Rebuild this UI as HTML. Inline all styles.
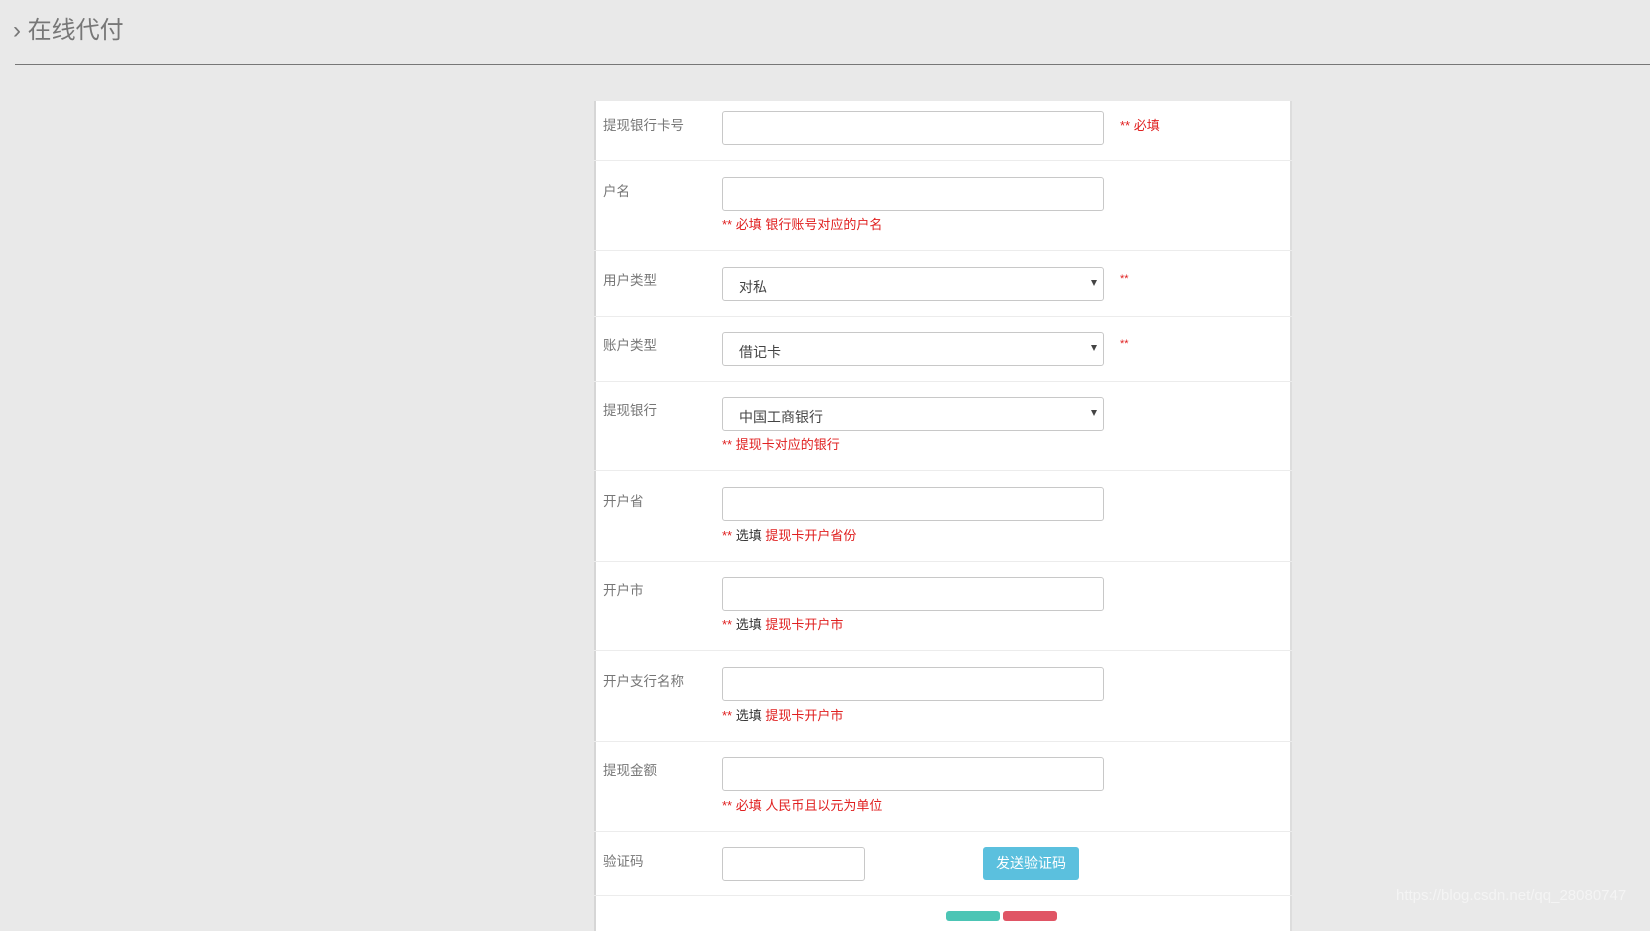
<!DOCTYPE html>
<html><head><meta charset="utf-8"><style>
*{margin:0;padding:0;box-sizing:border-box}
body{width:1650px;height:915px;background:#e9e9e9;font-family:"Liberation Sans","Noto Sans CJK SC",sans-serif;position:relative;overflow:hidden;color:#666}
.t{position:absolute;white-space:nowrap;line-height:1}
.panel{position:absolute;left:594px;top:101px;width:698px;height:830px;background:#fff;border-left:2px solid #d6d6d6;border-right:2px solid #ddd}
.sep{position:absolute;left:594px;width:698px;height:1px;background:#ececec}
.in{position:absolute;left:722px;width:382px;height:34px;border:1px solid #c8c8c8;border-radius:3px;background:#fff}
.sel span{position:absolute;left:16px;top:9px;font-size:14px;color:#444}
.sel i{position:absolute;right:6px;top:12px;width:0;height:0;border-left:3.5px solid transparent;border-right:3.5px solid transparent;border-top:6px solid #444}
.lab{left:603px;font-size:13.5px;color:#777}
.red{color:#e02020;font-size:13px}
.blk{color:#333}
</style></head><body>
<div class="t" style="left:13px;top:19px;font-size:24px;color:#777">›&nbsp;在线代付</div>
<div style="position:absolute;left:15px;top:64px;width:1635px;height:1px;background:#777"></div>
<div class="panel"></div>
<div class="sep" style="top:160px"></div><div class="sep" style="top:250px"></div><div class="sep" style="top:316px"></div><div class="sep" style="top:381px"></div><div class="sep" style="top:470px"></div><div class="sep" style="top:561px"></div><div class="sep" style="top:650px"></div><div class="sep" style="top:741px"></div><div class="sep" style="top:831px"></div><div class="sep" style="top:895px"></div>

<div class="t lab" style="top:119px">提现银行卡号</div>
<div class="in" style="top:111px"></div>
<div class="t red" style="left:1120px;top:119px">** 必填</div>

<div class="t lab" style="top:185px">户名</div>
<div class="in" style="top:177px"></div>
<div class="t red" style="left:722px;top:218px">** 必填 银行账号对应的户名</div>

<div class="t lab" style="top:274px">用户类型</div>
<div class="in sel" style="top:267px"><span>对私</span><i></i></div>
<div class="t red" style="left:1120px;top:274px;font-size:11px">**</div>

<div class="t lab" style="top:339px">账户类型</div>
<div class="in sel" style="top:332px"><span>借记卡</span><i></i></div>
<div class="t red" style="left:1120px;top:339px;font-size:11px">**</div>

<div class="t lab" style="top:404px">提现银行</div>
<div class="in sel" style="top:397px"><span>中国工商银行</span><i></i></div>
<div class="t red" style="left:722px;top:438px">** 提现卡对应的银行</div>

<div class="t lab" style="top:495px">开户省</div>
<div class="in" style="top:487px"></div>
<div class="t red" style="left:722px;top:529px">** <span class="blk">选填</span> 提现卡开户省份</div>

<div class="t lab" style="top:584px">开户市</div>
<div class="in" style="top:577px"></div>
<div class="t red" style="left:722px;top:618px">** <span class="blk">选填</span> 提现卡开户市</div>

<div class="t lab" style="top:675px">开户支行名称</div>
<div class="in" style="top:667px"></div>
<div class="t red" style="left:722px;top:709px">** <span class="blk">选填</span> 提现卡开户市</div>

<div class="t lab" style="top:764px">提现金额</div>
<div class="in" style="top:757px"></div>
<div class="t red" style="left:722px;top:799px">** 必填 人民币且以元为单位</div>

<div class="t lab" style="top:855px">验证码</div>
<div class="in" style="top:847px;width:143px"></div>
<div style="position:absolute;left:983px;top:847px;width:96px;height:33px;background:#5bc0de;border-radius:3px;color:#fff;font-size:14px;text-align:center;line-height:33px">发送验证码</div>

<div style="position:absolute;left:946px;top:911px;width:54px;height:10px;background:#4cc5b5;border-radius:3px"></div>
<div style="position:absolute;left:1003px;top:911px;width:54px;height:10px;background:#e05565;border-radius:3px"></div>
<div class="t" style="left:1396px;top:888px;font-size:15px;color:#f4f4f4">https://blog.csdn.net/qq_28080747</div>
</body></html>
